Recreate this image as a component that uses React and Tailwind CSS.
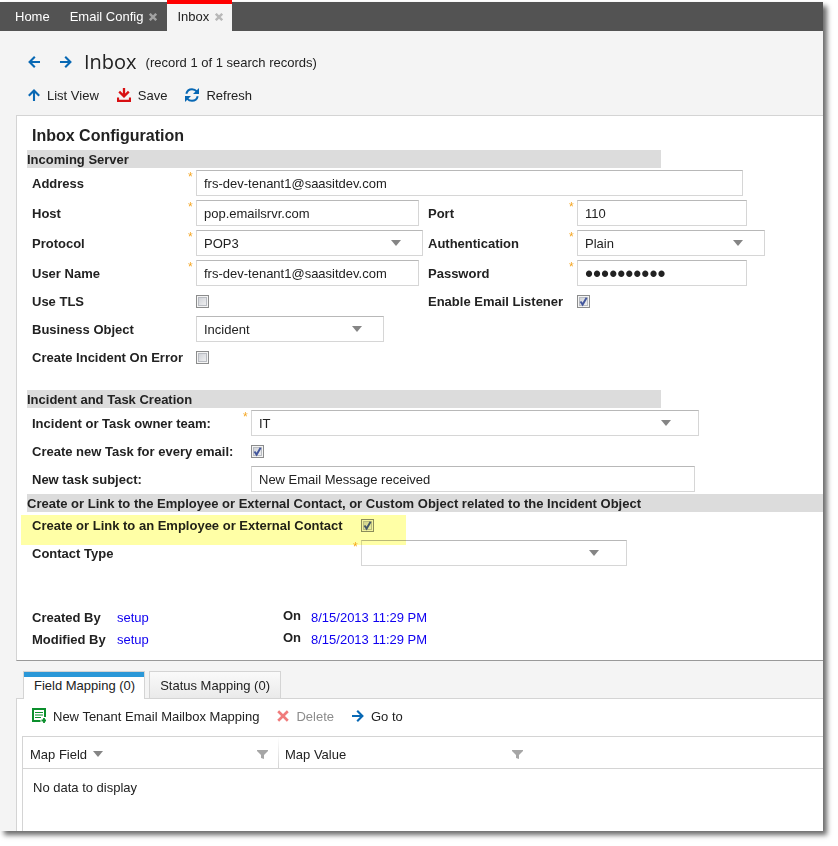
import React from 'react';

const ARROW_PATH = 'M0 6H10.5M5.2 0.8L10.4 6L5.2 11.2';

function Arrow({ dir = 'right' }) {
  const turn = { right: 0, left: 180, up: -90 }[dir];
  return (
    <svg width="12" height="12" viewBox="0 0 12 12" className="shrink-0" aria-hidden="true">
      <path d={ARROW_PATH} transform={`rotate(${turn} 6 6)`} fill="none" stroke="#0868b4" strokeWidth="2.1" />
    </svg>
  );
}

function SaveIcon() {
  return (
    <svg width="14" height="14" viewBox="0 0 14 14" className="shrink-0" aria-hidden="true">
      <path d="M7 0V8M2.2 3.6L7 8.4L11.8 3.6" fill="none" stroke="#d80f12" strokeWidth="2.3" />
      <path d="M1 9.5V12.8H13V9.5" fill="none" stroke="#d80f12" strokeWidth="2.2" />
    </svg>
  );
}

function RefreshIcon() {
  return (
    <svg width="14" height="14" viewBox="0 0 14 14" className="shrink-0" aria-hidden="true">
      <path d="M1.3 5.8C2 3 4.3 1.2 7 1.2C9 1.2 10.6 2 11.8 3.4" fill="none" stroke="#0868b4" strokeWidth="2" />
      <path d="M14 0V6H8Z" fill="#0868b4" />
      <path d="M12.7 8.2C12 11 9.7 12.8 7 12.8C5 12.8 3.4 12 2.2 10.6" fill="none" stroke="#0868b4" strokeWidth="2" />
      <path d="M0 14V8H6Z" fill="#0868b4" />
    </svg>
  );
}

function NewIcon() {
  return (
    <svg width="14" height="15" viewBox="0 0 14 15" className="shrink-0" aria-hidden="true">
      <path d="M13 9V1H1V13H8.5" fill="none" stroke="#0b8f2c" strokeWidth="2" />
      <path d="M3 4.5H11M3 7H11M3 9.5H9" fill="none" stroke="#0b8f2c" strokeWidth="1" />
      <path d="M12 10V15M9.5 12.5H14" fill="none" stroke="#0b8f2c" strokeWidth="1.8" />
    </svg>
  );
}

function Cross({ size, color, width }) {
  return (
    <svg width={size} height={size} viewBox="0 0 10 10" className="shrink-0" aria-hidden="true">
      <path d="M1 1L9 9M9 1L1 9" fill="none" stroke={color} strokeWidth={width} />
    </svg>
  );
}

function Triangle() {
  return (
    <svg width="10" height="6" viewBox="0 0 10 6" aria-hidden="true">
      <path d="M0 0H10L5 6Z" fill="#858585" />
    </svg>
  );
}

function Funnel() {
  return (
    <svg width="11" height="9" viewBox="0 0 11 9" aria-hidden="true">
      <path d="M0 0H11V1L7 5V9L4 8V5L0 1Z" fill="#a6a6a6" />
    </svg>
  );
}

const BOX = 'block h-[26px] w-full appearance-none rounded-none border border-[#d6d6d6] border-t-[#b8b8b8] bg-white px-[7px] text-[#222] outline-none';

function Field({ required, width, children }) {
  return (
    <div className={`relative ${width}`}>
      {required && <span className="absolute -left-2 top-0 text-[12px] leading-[14px] text-[#f5a623]">*</span>}
      {children}
    </div>
  );
}

function TextField({ id, value, required, width, type = 'text' }) {
  return (
    <Field required={required} width={width}>
      <input id={id} type={type} defaultValue={value} className={`${BOX} ${type === 'password' ? 'pt-[2px] text-[23px]' : 'text-[13px]'}`} />
    </Field>
  );
}

function SelectField({ id, value, required, width, arrow = 'right-[22px]' }) {
  return (
    <Field required={required} width={width}>
      <select id={id} defaultValue={value} className={`${BOX} pt-[2px] text-[13px]`}>
        <option value={value}>{value}</option>
      </select>
      <span className={`pointer-events-none absolute top-[10px] ${arrow}`}>
        <Triangle />
      </span>
    </Field>
  );
}

function CheckField({ id, checked }) {
  return (
    <span className="grid w-[13px]">
      <input
        id={id}
        type="checkbox"
        defaultChecked={checked}
        className="peer col-start-1 row-start-1 size-[13px] appearance-none border border-[#8b8c8c] bg-linear-to-br from-[#c9ccd2] to-[#f6f6f6] shadow-[inset_0_0_0_1px_#f4f4f4,inset_0_0_0_2px_#b9bcc2]"
      />
      <svg viewBox="0 0 13 13" className="pointer-events-none invisible col-start-1 row-start-1 size-[13px] peer-checked:visible" aria-hidden="true">
        <path d="M3.5 6.5L5.6 9.6L9.6 2.8" fill="none" stroke="#43569c" strokeWidth="1.9" />
      </svg>
    </span>
  );
}

function Label({ htmlFor, children }) {
  return (
    <label htmlFor={htmlFor} className="pt-[2px] font-bold whitespace-nowrap">
      {children}
    </label>
  );
}

function SectionBar({ children, wide }) {
  return (
    <h3 className={`h-[18px] bg-[#dcdcdc] leading-5 font-bold whitespace-nowrap ${wide ? '' : 'w-[634px]'}`}>{children}</h3>
  );
}

function NavTab({ children, active, closable }) {
  return (
    <div className={`flex items-center gap-[6px] px-[10px] ${active ? '-mt-[2px] border-t-4 border-[#f00] bg-[#f4f4f4] pr-[9px] pb-[2px] text-[#222]' : 'text-white'}`}>
      <button type="button">{children}</button>
      {closable && (
        <button type="button" aria-label={`Close ${children}`}>
          <Cross size={8} color={active ? '#b9b9b9' : '#a2a2a2'} width={3} />
        </button>
      )}
    </div>
  );
}

function ToolButton({ icon, children, disabled }) {
  return (
    <button type="button" disabled={disabled} className="flex items-center gap-[7px] disabled:text-[#8c8c8c]">
      {icon}
      <span className="pt-[2px]">{children}</span>
    </button>
  );
}

function AuditRow({ label }) {
  return (
    <div className="grid h-[22px] grid-cols-[85px_166px_28px_auto] pl-[5px] leading-6">
      <span className="font-bold whitespace-nowrap">{label}</span>
      <span><a href="#setup" className="text-[#0f00f0]">setup</a></span>
      <span className="leading-5 font-bold">On</span>
      <span className="text-[#0f00f0]">8/15/2013 11:29 PM</span>
    </div>
  );
}

function ColumnHead({ children, sorted }) {
  return (
    <span className="flex items-center justify-between pt-1 pr-[10px] pl-[7px]">
      <span className="flex items-center gap-[6px]">
        <span className="pt-[2px]">{children}</span>
        {sorted && <Triangle />}
      </span>
      <Funnel />
    </span>
  );
}

export default function App() {
  return (
    <div className="flex min-h-screen bg-white pt-[2px] pr-[15px] pb-[15px] font-['Liberation_Sans',Arial,sans-serif] text-[13px] leading-4 text-[#222]">
      <div className="flex min-w-0 flex-1 flex-col bg-[#f4f4f4] shadow-[4px_4px_5px_#6b6b6b]">
        <nav className="flex h-[29px] bg-[#535353] pl-[5px]">
          <NavTab>Home</NavTab>
          <NavTab closable>Email Config</NavTab>
          <NavTab closable active>Inbox</NavTab>
        </nav>

        <header className="mt-[15px] mb-[3px] pl-7">
          <div className="flex h-8 items-center">
            <button type="button" aria-label="Previous record"><Arrow dir="left" /></button>
            <button type="button" aria-label="Next record" className="ml-5"><Arrow /></button>
            <h1 className="ml-3 font-['Open_Sans',sans-serif] text-[20px] leading-8">Inbox</h1>
            <span className="ml-[9px] pt-[2px]">(record 1 of 1 search records)</span>
          </div>
          <div className="flex h-[34px] items-center gap-[18px]">
            <ToolButton icon={<Arrow dir="up" />}>List View</ToolButton>
            <ToolButton icon={<SaveIcon />}>Save</ToolButton>
            <ToolButton icon={<RefreshIcon />}>Refresh</ToolButton>
          </div>
        </header>

        <main className="ml-4 border-t border-b border-l border-t-[#d4d4d4] border-b-[#999] border-l-[#d4d4d4] bg-white pb-[10px] pl-[10px]">
          <h2 className="pt-[6px] pl-[5px] text-[16px] leading-7 font-bold">Inbox Configuration</h2>

          <SectionBar>Incoming Server</SectionBar>
          <div className="mt-[2px] grid grid-cols-[164px_1fr] items-center gap-y-1 pl-[5px]">
            <Label htmlFor="address">Address</Label>
            <TextField id="address" value="frs-dev-tenant1@saasitdev.com" required width="w-[547px]" />
          </div>
          <div className="mt-1 grid grid-cols-[164px_232px_149px_1fr] items-center gap-y-1 pl-[5px]">
            <Label htmlFor="host">Host</Label>
            <TextField id="host" value="pop.emailsrvr.com" required width="w-[223px]" />
            <Label htmlFor="port">Port</Label>
            <TextField id="port" value="110" required width="w-[170px]" />
            <Label htmlFor="protocol">Protocol</Label>
            <SelectField id="protocol" value="POP3" required width="w-[227px]" />
            <Label htmlFor="auth">Authentication</Label>
            <SelectField id="auth" value="Plain" required width="w-[188px]" />
            <Label htmlFor="user">User Name</Label>
            <TextField id="user" value="frs-dev-tenant1@saasitdev.com" required width="w-[223px]" />
            <Label htmlFor="password">Password</Label>
            <TextField id="password" type="password" value="0123456789" required width="w-[170px]" />
          </div>
          <div className="mt-[2px] grid auto-rows-[26px] grid-cols-[164px_232px_149px_1fr] items-center gap-y-[2px] pl-[5px]">
            <Label htmlFor="tls">Use TLS</Label>
            <CheckField id="tls" />
            <Label htmlFor="listener">Enable Email Listener</Label>
            <CheckField id="listener" checked />
          </div>
          <div className="mt-[2px] grid auto-rows-[26px] grid-cols-[164px_1fr] items-center gap-y-[2px] pl-[5px]">
            <Label htmlFor="object">Business Object</Label>
            <SelectField id="object" value="Incident" width="w-[188px]" />
            <Label htmlFor="on-error">Create Incident On Error</Label>
            <CheckField id="on-error" />
          </div>

          <div className="mt-5">
            <SectionBar>Incident and Task Creation</SectionBar>
          </div>
          <div className="my-[2px] grid auto-rows-[26px] grid-cols-[219px_1fr] items-center gap-y-[2px] pl-[5px]">
            <Label htmlFor="team">Incident or Task owner team:</Label>
            <SelectField id="team" value="IT" required width="w-[448px]" arrow="right-7" />
            <Label htmlFor="new-task">Create new Task for every email:</Label>
            <CheckField id="new-task" checked />
            <Label htmlFor="subject">New task subject:</Label>
            <TextField id="subject" value="New Email Message received" width="w-[444px]" />
          </div>

          <SectionBar wide>Create or Link to the Employee or External Contact, or Custom Object related to the Incident Object</SectionBar>
          <div className="relative grid auto-rows-[26px] grid-cols-[329px_1fr] items-center gap-y-[2px] pl-[5px]">
            <Label htmlFor="link">Create or Link to an Employee or External Contact</Label>
            <CheckField id="link" checked />
            <Label htmlFor="contact">Contact Type</Label>
            <SelectField id="contact" value="" required width="w-[266px]" arrow="right-7" />
            <span className="pointer-events-none absolute top-[3px] -left-[6px] h-[30px] w-[385px] bg-[#ffffa6] mix-blend-multiply" />
          </div>

          <div className="mt-10">
            <AuditRow label="Created By" />
            <AuditRow label="Modified By" />
          </div>
        </main>

        <div className="mt-[10px] flex h-[27px] gap-1 pl-[23px]">
          <button type="button" className="z-10 -mb-px flex flex-col border border-b-0 border-[#d4d4d4] bg-white">
            <span className="h-[5px] w-full bg-[#2b98d8]" />
            <span className="pr-[9px] pl-[10px] leading-[18px]">Field Mapping (0)</span>
          </button>
          <button type="button" className="border border-b-0 border-[#d4d4d4] bg-linear-to-b from-[#fafafa] to-[#eaeaea] px-[10px] pt-[2px]">
            Status Mapping (0)
          </button>
        </div>

        <section className="ml-4 flex flex-1 flex-col border-t border-l border-[#d4d4d4] bg-white pl-[5px]">
          <div className="mb-1 flex h-[33px] items-center gap-[18px] pl-[10px]">
            <ToolButton icon={<NewIcon />}>New Tenant Email Mailbox Mapping</ToolButton>
            <ToolButton icon={<Cross size={12} color="#f07c7c" width={2.2} />} disabled>Delete</ToolButton>
            <ToolButton icon={<Arrow />}>Go to</ToolButton>
          </div>
          <div className="flex-1 border-t border-l border-[#d4d4d4]">
            <table className="w-full table-fixed border-collapse text-left">
              <thead>
                <tr className="h-[31px] border-b border-[#d4d4d4]">
                  <th className="w-[255px] p-0 font-normal"><ColumnHead sorted>Map Field</ColumnHead></th>
                  <th className="w-[255px] bg-linear-to-b from-white to-[#d4d4d4] bg-size-[1px_100%] bg-no-repeat p-0 font-normal"><ColumnHead>Map Value</ColumnHead></th>
                  <th className="p-0" />
                </tr>
              </thead>
              <tbody>
                <tr>
                  <td colSpan={3} className="py-[11px] pl-[10px]">No data to display</td>
                </tr>
              </tbody>
            </table>
          </div>
        </section>
      </div>
    </div>
  );
}
